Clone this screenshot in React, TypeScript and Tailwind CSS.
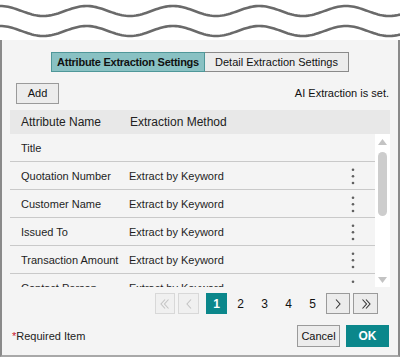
import React from "react";

const font = { fontFamily: '"Liberation Sans", Arial, sans-serif' };

interface Row {
  name: string;
  method: string;
}

const rows: Row[] = [
  { name: "Title", method: "" },
  { name: "Quotation Number", method: "Extract by Keyword" },
  { name: "Customer Name", method: "Extract by Keyword" },
  { name: "Issued To", method: "Extract by Keyword" },
  { name: "Transaction Amount", method: "Extract by Keyword" },
  { name: "Contact Person", method: "Extract by Keyword" },
];

// wavy "torn edge" lines above the panel
const wavePoints = (base: number) => {
  const pts: string[] = [];
  for (let x = -2; x <= 402; x += 2) {
    const y = base - 5 * Math.cos((2 * Math.PI * x) / 86.5);
    pts.push(`${x},${y.toFixed(2)}`);
  }
  return pts.join(" ");
};

const Waves = () => (
  <svg width="400" height="40" viewBox="0 0 400 40" className="block shrink-0">
    <polyline points={wavePoints(11)} fill="none" stroke="#6a6a6a" strokeWidth="2.6" />
    <polyline points={wavePoints(31)} fill="none" stroke="#6a6a6a" strokeWidth="2.6" />
  </svg>
);

const Kebab = () => (
  <svg width="4" height="17" viewBox="0 0 4 17">
    <circle cx="2" cy="1.7" r="1.3" fill="#606060" />
    <circle cx="2" cy="8.3" r="1.3" fill="#606060" />
    <circle cx="2" cy="15" r="1.3" fill="#606060" />
  </svg>
);

const Chevron = ({ double, left, color }: { double?: boolean; left?: boolean; color: string }) => (
  <svg width="12" height="12" viewBox="0 0 12 12" className={left ? "-scale-x-100" : ""}>
    {double ? (
      <>
        <path d="M2.5 1.5 L6.5 6 L2.5 10.5" fill="none" stroke={color} strokeWidth="1.1" />
        <path d="M6 1.5 L10 6 L6 10.5" fill="none" stroke={color} strokeWidth="1.1" />
      </>
    ) : (
      <path d="M4 1.5 L8 6 L4 10.5" fill="none" stroke={color} strokeWidth="1.1" />
    )}
  </svg>
);

export default function App() {
  return (
    <div style={font} className="w-[400px] h-[357px] bg-white flex flex-col overflow-hidden text-[#1e1e1e]">
      <Waves />
      <div className="flex-1 flex flex-col bg-[#f4f4f4] border-l-2 border-r-2 border-b-2 border-l-[#8a8a8a] border-r-[#8a8a8a] border-b-[#a8a8a8] pl-[8px] pr-[8px]">
        {/* tabs */}
        <div className="flex justify-center pt-[12px]">
          <div className="h-[20px] w-[154px] flex items-center justify-center whitespace-nowrap bg-[#89c1c3] border border-[#4f9799] text-[11px] tracking-[-0.25px] font-bold text-[#111]">
            Attribute Extraction Settings
          </div>
          <div className="h-[20px] w-[144px] flex items-center justify-center whitespace-nowrap bg-[#ececec] border border-l-0 border-[#8a8a8a] text-[11px] text-[#111]">
            Detail Extraction Settings
          </div>
        </div>

        {/* toolbar */}
        <div className="flex items-center justify-between mt-[11px] pl-[6px] pr-[1px]">
          <button className="h-[21px] w-[43px] bg-[#ececec] border border-[#9a9a9a] text-[11px] text-[#111]">
            Add
          </button>
          <span className="text-[11px] text-[#111]">AI Extraction is set.</span>
        </div>

        {/* table */}
        <div className="mt-[6px] flex flex-col">
          <div className="h-[24px] bg-[#e8e8e8] flex items-center text-[12px] text-[#222]">
            <span className="pl-[11px] w-[120px]">Attribute Name</span>
            <span>Extraction Method</span>
          </div>
          <div className="flex h-[153px]">
            <div className="flex-1 overflow-hidden">
              {rows.map((r) => (
                <div
                  key={r.name}
                  className="h-[28px] border-b border-[#c9c9c9] flex items-center pt-[1px] text-[11px] text-[#1e1e1e]"
                >
                  <span className="pl-[11px] w-[119px]">{r.name}</span>
                  <span className="flex-1">{r.method}</span>
                  {r.method && (
                    <span className="w-[4px] mr-[20px] flex">
                      <Kebab />
                    </span>
                  )}
                </div>
              ))}
            </div>
            <div className="w-[15px] bg-white flex flex-col items-center pt-[5px] pb-[4px]">
              <svg width="9" height="6" viewBox="0 0 9 6">
                <path d="M0 6 L4.5 0 L9 6 Z" fill="#c3c3c3" />
              </svg>
              <div className="w-[9px] h-[64px] mt-[7px] rounded-full bg-[#cdcdcd]" />
              <div className="flex-1" />
              <svg width="9" height="6" viewBox="0 0 9 6">
                <path d="M0 0 L9 0 L4.5 6 Z" fill="#c3c3c3" />
              </svg>
            </div>
          </div>
        </div>

        {/* pagination */}
        <div className="flex justify-end mt-[6px] pr-[12px] gap-[3px] text-[12px]">
          <div className="w-[20px] h-[21px] flex items-center justify-center bg-[#f0f0f0] border border-[#d8d8d8]">
            <Chevron double left color="#c4c4c4" />
          </div>
          <div className="w-[21px] h-[21px] flex items-center justify-center bg-[#f0f0f0] border border-[#d8d8d8]">
            <Chevron left color="#c4c4c4" />
          </div>
          <div className="ml-[4px] w-[21px] h-[21px] flex items-center justify-center bg-[#0b878b] text-white font-bold">
            1
          </div>
          {["2", "3", "4", "5"].map((n) => (
            <div key={n} className="w-[21px] h-[21px] flex items-center justify-center text-[#111]">
              {n}
            </div>
          ))}
          <div className="w-[24px] h-[21px] flex items-center justify-center bg-[#ececec] border border-[#9a9a9a]">
            <Chevron color="#333" />
          </div>
          <div className="w-[25px] h-[21px] flex items-center justify-center bg-[#ececec] border border-[#9a9a9a]">
            <Chevron double color="#333" />
          </div>
        </div>

        {/* footer */}
        <div className="flex items-center justify-between mt-[11px] pr-[1px]">
          <span className="text-[11px] text-[#222] pl-[2px]">
            <span className="text-[#c8102e]">*</span>Required Item
          </span>
          <div className="flex gap-[6px]">
            <button className="w-[43px] h-[22px] bg-[#ececec] border border-[#9a9a9a] text-[11px] text-[#111]">
              Cancel
            </button>
            <button className="w-[43px] h-[22px] bg-[#0b878b] text-white text-[12px] font-bold">
              OK
            </button>
          </div>
        </div>
      </div>
    </div>
  );
}
